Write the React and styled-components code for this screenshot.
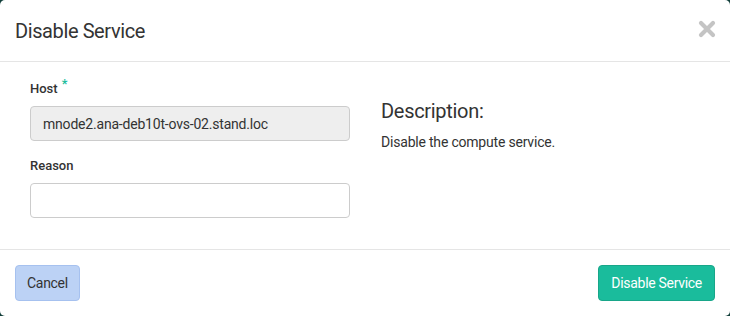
import React from 'react'
import styled, { createGlobalStyle } from 'styled-components'

const Global = createGlobalStyle`
  html, body {
    margin: 0;
    padding: 0;
    background: #123f3a;
  }
  body {
    font-family: Roboto, "Liberation Sans", sans-serif;
    color: #333;
  }
`

const Modal = styled.div`
  width: 730px;
  height: 316px;
  background: #fff;
  border-radius: 5px;
  display: flex;
  flex-direction: column;
  overflow: hidden;
`

const Header = styled.div`
  height: 62px;
  box-sizing: border-box;
  padding: 0 15px;
  display: flex;
  align-items: center;
  justify-content: space-between;
  border-bottom: 1px solid #e5e5e5;
`

const Title = styled.h4`
  margin: 0;
  font-size: 20px;
  font-weight: normal;
  letter-spacing: -0.4px;
  color: #333;
`

const Close = styled.button`
  border: none;
  background: none;
  padding: 0;
  width: 18px;
  height: 18px;
  margin-right: -1px;
  margin-top: -4px;
  cursor: pointer;
  display: flex;
`

const Body = styled.div`
  flex: 1;
  padding: 18px 30px 0;
  display: grid;
  grid-template-columns: 320px 1fr;
  column-gap: 31px;
  border-bottom: 1px solid #e5e5e5;
`

const Field = styled.div`
  margin-bottom: 16px;
`

const Label = styled.label`
  display: block;
  font-size: 13px;
  font-weight: 500;
  margin: 0 0 8px;
  line-height: 18px;
`

const Req = styled.span`
  color: #1abc9c;
  margin-left: 4px;
  position: relative;
  top: -5px;
`

const Input = styled.input`
  box-sizing: border-box;
  display: block;
  width: 320px;
  height: 35px;
  border: 1px solid #ccc;
  border-radius: 4px;
  padding: 0 12px;
  font: inherit;
  font-size: 14px;
  letter-spacing: -0.2px;
  color: #333;
  background: ${p => (p.readOnly ? '#eee' : '#fff')};
  outline: none;
`

const Side = styled.div`
  padding-top: 19px;
`

const SideTitle = styled.h3`
  margin: 0 0 11px;
  font-size: 20px;
  font-weight: normal;
  letter-spacing: -0.3px;
`

const SideText = styled.p`
  margin: 0;
  font-size: 14px;
  letter-spacing: -0.2px;
`

const Footer = styled.div`
  height: 66px;
  box-sizing: border-box;
  padding: 0 15px;
  display: flex;
  align-items: center;
  justify-content: space-between;
`

const Button = styled.button`
  height: 36px;
  padding: 0 ${p => (p.primary ? '12px' : '11px')};
  border-radius: 4px;
  font: inherit;
  font-size: 14px;
  letter-spacing: -0.3px;
  cursor: pointer;
  border: 1px solid ${p => (p.primary ? '#18a689' : '#a6c1ef')};
  background: ${p => (p.primary ? '#1abc9c' : '#bcd2f5')};
  color: ${p => (p.primary ? '#fff' : '#333')};
`

export default function App() {
  return (
    <>
      <Global />
      <Modal>
        <Header>
          <Title>Disable Service</Title>
          <Close aria-label="Close">
            <svg width="18" height="18" viewBox="0 0 18 18">
              <path d="M3 3 L15 15 M15 3 L3 15" stroke="#c4c4c4" strokeWidth="4.2" strokeLinecap="round" />
            </svg>
          </Close>
        </Header>
        <Body>
          <div>
            <Field>
              <Label>Host<Req>*</Req></Label>
              <Input readOnly value="mnode2.ana-deb10t-ovs-02.stand.loc" />
            </Field>
            <Field>
              <Label>Reason</Label>
              <Input />
            </Field>
          </div>
          <Side>
            <SideTitle>Description:</SideTitle>
            <SideText>Disable the compute service.</SideText>
          </Side>
        </Body>
        <Footer>
          <Button>Cancel</Button>
          <Button primary>Disable Service</Button>
        </Footer>
      </Modal>
    </>
  )
}
